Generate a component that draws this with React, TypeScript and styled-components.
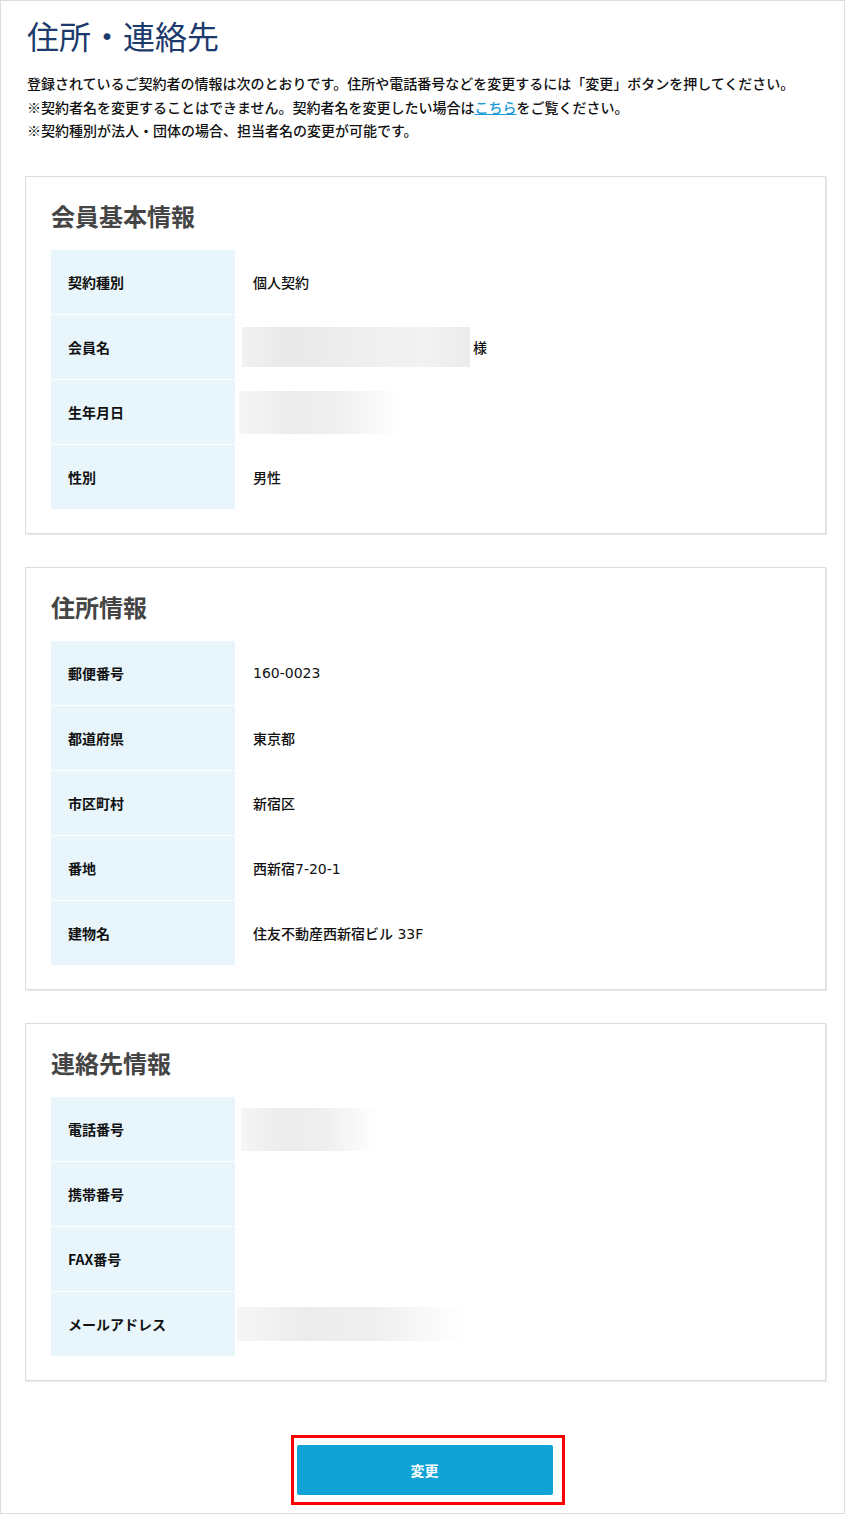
import React from 'react';
import styled, { createGlobalStyle } from 'styled-components';

const GlobalStyle = createGlobalStyle`
  body {
    margin: 0;
    background: #fff;
    font-family: "Noto Sans CJK JP", "Noto Sans", sans-serif;
    color: #111;
  }
`;

type Item = { label: string; value?: string; blur?: { w: number; h: number; ml: number; fade?: boolean }; suffix?: string };

const sections: { title: string; items: Item[] }[] = [
  {
    title: '会員基本情報',
    items: [
      { label: '契約種別', value: '個人契約' },
      { label: '会員名', blur: { w: 228, h: 40, ml: -11 }, suffix: '様' },
      { label: '生年月日', blur: { w: 162, h: 43, ml: -14, fade: true } },
      { label: '性別', value: '男性' },
    ],
  },
  {
    title: '住所情報',
    items: [
      { label: '郵便番号', value: '160-0023' },
      { label: '都道府県', value: '東京都' },
      { label: '市区町村', value: '新宿区' },
      { label: '番地', value: '西新宿7-20-1' },
      { label: '建物名', value: '住友不動産西新宿ビル 33F' },
    ],
  },
  {
    title: '連絡先情報',
    items: [
      { label: '電話番号', blur: { w: 138, h: 43, ml: -12, fade: true } },
      { label: '携帯番号' },
      { label: 'FAX番号' },
      { label: 'メールアドレス', blur: { w: 228, h: 34, ml: -16, fade: true } },
    ],
  },
];

export default function App() {
  return (
    <>
      <GlobalStyle />
      <Page>
        <Title>住所・連絡先</Title>
        <Intro>
          登録されているご契約者の情報は次のとおりです。住所や電話番号などを変更するには「変更」ボタンを押してください。
          <br />
          ※契約者名を変更することはできません。契約者名を変更したい場合は<IntroLink href="#">こちら</IntroLink>をご覧ください。
          <br />
          ※契約種別が法人・団体の場合、担当者名の変更が可能です。
        </Intro>

        {sections.map((s) => (
          <Card key={s.title}>
            <CardTitle>{s.title}</CardTitle>
            <InfoTable>
              {s.items.map((it) => (
                <Row key={it.label}>
                  <Label>{it.label}</Label>
                  <Value>
                    {it.blur && <Blur $w={it.blur.w} $h={it.blur.h} $ml={it.blur.ml} $fade={it.blur.fade} />}
                    {it.value}
                    {it.suffix && <Suffix>{it.suffix}</Suffix>}
                  </Value>
                </Row>
              ))}
            </InfoTable>
          </Card>
        ))}

        <ButtonRow>
          <Highlight>
            <ChangeButton type="button">変更</ChangeButton>
          </Highlight>
        </ButtonRow>
      </Page>
    </>
  );
}

const Page = styled.div`
  box-sizing: border-box;
  width: 845px;
  height: 1514px;
  border: 1px solid #dddddd;
  padding: 15px 18px 0 24px;
`;

const Title = styled.h1`
  margin: 0 0 0 2px;
  font-size: 32px;
  line-height: 38px;
  font-weight: 400;
  color: #1c3a6b;
`;

const Intro = styled.p`
  margin: 18px 0 0 2px;
  font-size: 14px;
  line-height: 23.5px;
  font-weight: 500;
  color: #111;
`;

const IntroLink = styled.a`
  color: #1a9ad6;
  text-decoration: underline;
`;

const Card = styled.section`
  margin-top: 33px;
  border: 1px solid #dcdcdc;
  box-shadow: 1px 1px 1px rgba(0, 0, 0, 0.08);
  padding: 24px 24px 24px 25px;
  background: #fff;
`;

const CardTitle = styled.h2`
  margin: 0 0 19px;
  font-size: 24px;
  line-height: 30px;
  font-weight: 700;
  color: #454545;
`;

const InfoTable = styled.div`
  display: flex;
  flex-direction: column;
`;

const Row = styled.div`
  display: flex;
  align-items: stretch;
  height: 65px;
  &:last-child {
    height: 64px;
  }
  &:not(:last-child) > div:first-child {
    border-bottom: 1px solid #fff;
  }
`;

const Label = styled.div`
  width: 184px;
  flex: none;
  display: flex;
  align-items: center;
  padding-left: 17px;
  box-sizing: border-box;
  background: #e8f6fc;
  font-size: 14px;
  font-weight: 700;
  color: #111;
`;

const Value = styled.div`
  flex: 1;
  display: flex;
  align-items: center;
  padding-left: 18px;
  font-family: "DejaVu Sans", "Noto Sans CJK JP", sans-serif;
  font-size: 14px;
  font-weight: 500;
  color: #111;
`;

const Blur = styled.div<{ $w: number; $h: number; $ml: number; $fade?: boolean }>`
  width: ${(p) => p.$w}px;
  height: ${(p) => p.$h}px;
  margin-left: ${(p) => p.$ml}px;
  background: ${(p) =>
    p.$fade
      ? 'linear-gradient(90deg, #f6f6f6 0%, #ececec 30%, #efefef 60%, rgba(255,255,255,0) 100%)'
      : 'linear-gradient(90deg, #f1f1f1 0%, #e9e9e9 20%, #efefef 55%, #f2f2f2 80%, #ebebeb 100%)'};
`;

const Suffix = styled.span`
  margin-left: 3px;
`;

const ButtonRow = styled.div`
  display: flex;
  justify-content: center;
  margin-top: 54px;
`;

const Highlight = styled.div`
  border: 3px solid #ff0000;
  padding: 7px 9px 7px 3px;
  margin-left: 4px;
`;

const ChangeButton = styled.button`
  display: block;
  width: 256px;
  height: 50px;
  border: none;
  border-radius: 2px;
  background: #0fa3d6;
  color: #fff;
  font-family: "Noto Sans CJK JP", "Noto Sans", sans-serif;
  font-size: 14px;
  font-weight: 700;
  cursor: pointer;
`;
